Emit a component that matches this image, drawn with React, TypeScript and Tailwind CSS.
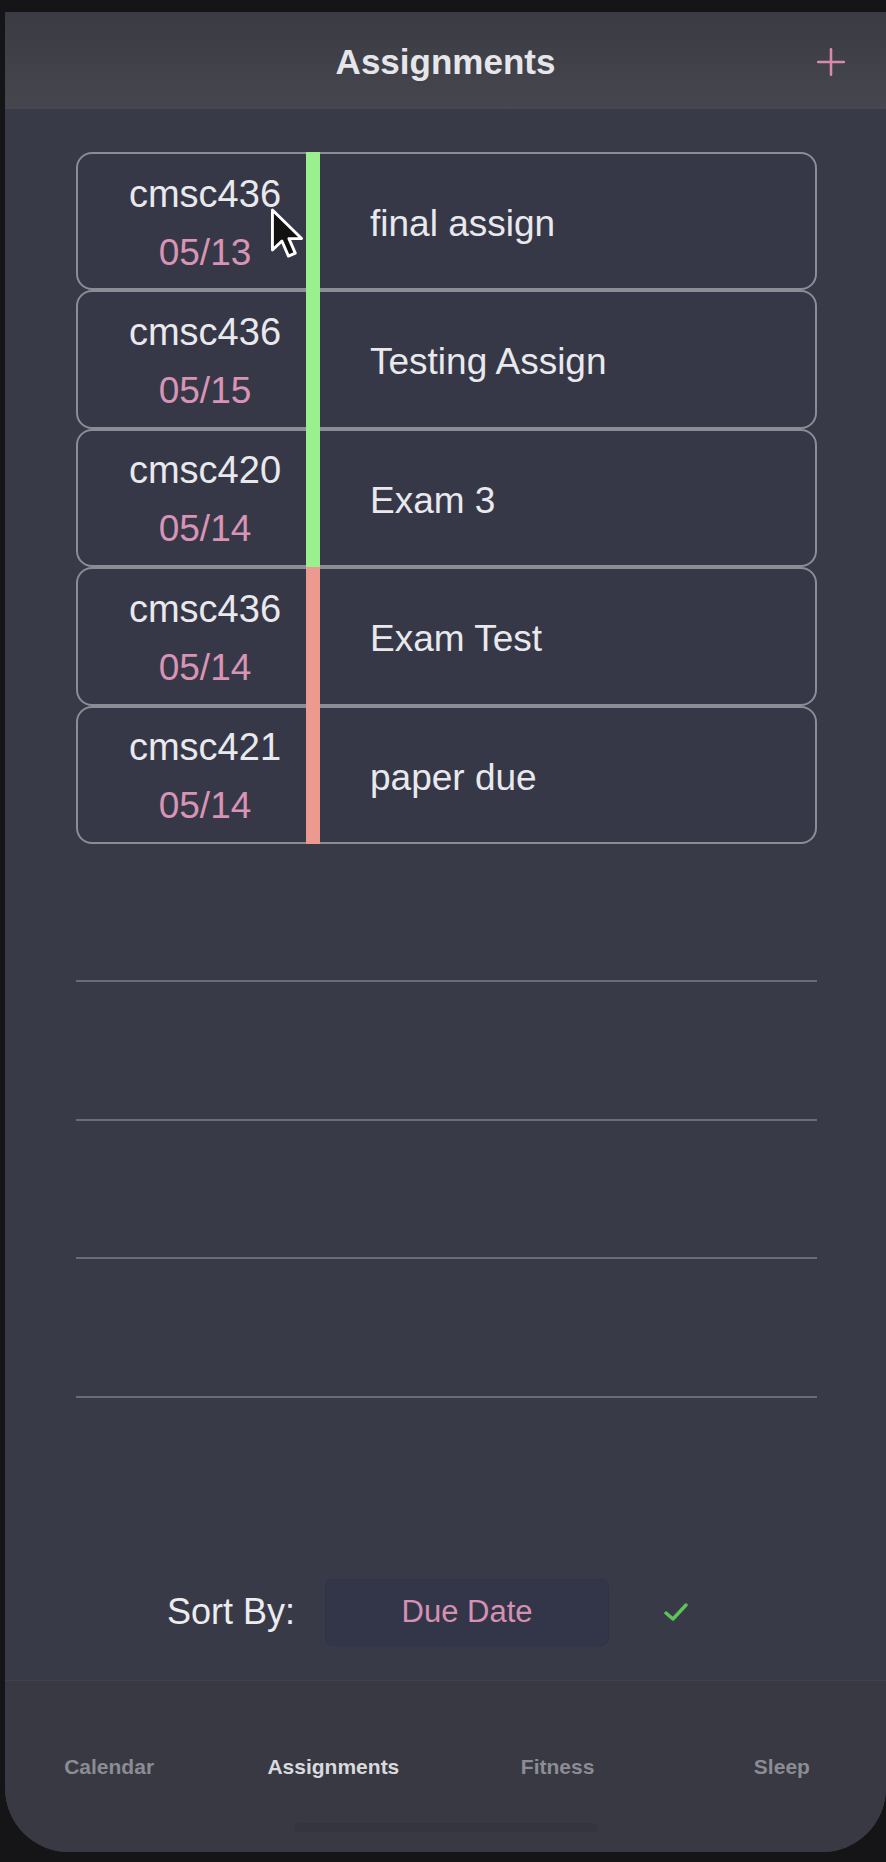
import { Plus } from "lucide-react";

const assignments = [
  { course: "cmsc436", due: "05/13", title: "final assign", status: "ok" },
  { course: "cmsc436", due: "05/15", title: "Testing Assign", status: "ok" },
  { course: "cmsc420", due: "05/14", title: "Exam 3", status: "ok" },
  { course: "cmsc436", due: "05/14", title: "Exam Test", status: "late" },
  { course: "cmsc421", due: "05/14", title: "paper due", status: "late" },
];

const tabs = [
  { label: "Calendar", active: false },
  { label: "Assignments", active: true },
  { label: "Fitness", active: false },
  { label: "Sleep", active: false },
];

function Cursor() {
  return (
    <svg
      className="pointer-events-none absolute left-[192px] top-[53px] h-[52px] w-[34px]"
      viewBox="-1 -1 14 21"
    >
      <path
        d="M0 0 L0 16.5 L3.9 12.8 L6.6 19 L9.4 17.8 L6.8 11.8 L12 11.8 Z"
        fill="#111"
        stroke="#fff"
        strokeWidth="1.2"
        strokeLinejoin="round"
      />
    </svg>
  );
}

function AssignmentRow({ item, first }: { item: (typeof assignments)[number]; first: boolean }) {
  const barColor = item.status === "ok" ? "bg-[#9af08f]" : "bg-[#ec9a90]";
  return (
    <div className="relative flex h-[138.4px] items-stretch rounded-[16px] border-2 border-[#8a8c96] bg-[#363848]">
      <div className="flex w-[228px] flex-col items-center justify-center pl-[26px] pt-[4px] leading-[40px]">
        <span className="text-[38px] text-[#e9e9ed]">{item.course}</span>
        <span className="mt-[19px] text-[37px] text-[#d894b4]">{item.due}</span>
      </div>
      <div className={`-my-[2px] w-[14px] ${barColor}`} />
      <div className="flex flex-1 items-center pl-[50px] pt-[5px] text-[37px] text-[#e9e9ed]">
        {item.title}
      </div>
      {first ? <Cursor /> : null}
    </div>
  );
}

export default function App() {
  return (
    <div
      className="min-h-[1862px] w-[886px] bg-[#151517] pb-[10px] pl-[5px] pt-[12px]"
      style={{ fontFamily: '"Liberation Sans", Arial, sans-serif' }}
    >
      <div className="flex h-[1840px] flex-col overflow-hidden rounded-b-[64px] bg-[#393a47]">
        <header className="grid h-[97px] grid-cols-[1fr_auto_1fr] items-center bg-gradient-to-b from-[#3a3b43] to-[#45464e] pt-[3px]">
          <div />
          <h1 className="text-[35px] font-bold text-[#e6e6ea]">Assignments</h1>
          <div className="flex justify-end pr-[33px]">
            <Plus className="h-[44px] w-[44px] text-[#d98aaa]" strokeWidth={1.4} />
          </div>
        </header>

        <main className="flex flex-1 flex-col pl-[71px] pr-[69px] pt-[43px]">
          {assignments.map((item, i) => (
            <AssignmentRow key={i} item={item} first={i === 0} />
          ))}
          {[0, 1, 2, 3].map((i) => (
            <div key={i} className="h-[138.4px] border-b-2 border-[#6b6c77]" />
          ))}

          <div className="mt-[181px] flex items-center pl-[91px]">
            <span className="text-[36px] text-[#ececf0]">Sort By:</span>
            <div className="ml-[30px] flex h-[67px] w-[284px] items-center justify-center rounded-[8px] border border-[#30334a] bg-[#333649]">
              <span className="text-[31px] text-[#d690b2]">Due Date</span>
            </div>
            <svg className="ml-[55px] h-[22px] w-[24px]" viewBox="0 0 24 22">
              <path
                d="M2 12 L9 18 L22 4"
                fill="none"
                stroke="#5dc45a"
                strokeWidth="3.4"
                strokeLinecap="round"
                strokeLinejoin="round"
              />
            </svg>
          </div>
        </main>

        <nav className="flex h-[172px] flex-col border-t border-[#3f404a] bg-[#383942]">
          <div className="-mx-[8px] mt-[70px] grid grid-cols-4">
            {tabs.map((tab) => (
              <span
                key={tab.label}
                className={`text-center text-[21px] font-bold ${
                  tab.active ? "text-[#dadade]" : "text-[#8b8c94]"
                }`}
              >
                {tab.label}
              </span>
            ))}
          </div>
          <div className="mx-auto mt-[40px] h-[9px] w-[304px] rounded-full bg-[#34353e]" />
        </nav>
      </div>
    </div>
  );
}
